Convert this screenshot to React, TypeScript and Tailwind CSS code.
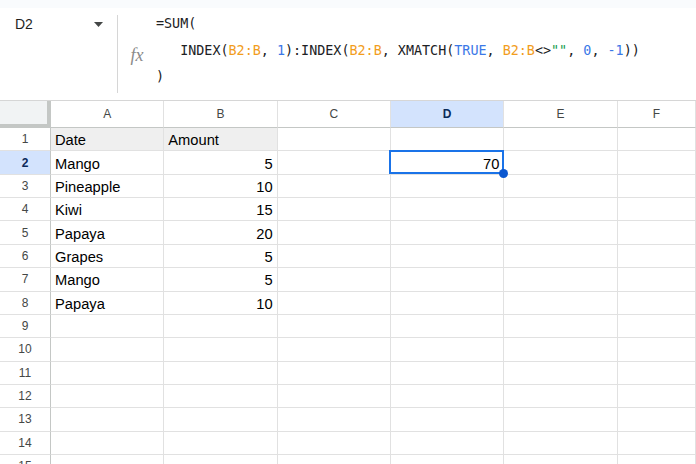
import React from "react";

const COLS = ["A", "B", "C", "D", "E", "F"];
const data: [string, string][] = [
  ["Date", "Amount"],
  ["Mango", "5"],
  ["Pineapple", "10"],
  ["Kiwi", "15"],
  ["Papaya", "20"],
  ["Grapes", "5"],
  ["Mango", "5"],
  ["Papaya", "10"],
];

const O = "text-[#f29d1d]";
const Bl = "text-[#3b78e7]";
const G = "text-[#129a4a]";

function Row({ n }: { n: number }) {
  const d = data[n - 1];
  const isHeader = n === 1;
  const sel = n === 2;
  return (
    <div className="flex h-[23.36px] shrink-0">
      <div
        className={`w-[51px] shrink-0 border-r border-b border-r-[#c4c7c5] border-b-[#e1e1e1] flex items-center justify-center text-[12px] ${
          sel ? "bg-[#d3e3fd] font-bold text-[#0b2a5a]" : "text-[#444746]"
        }`}
      >
        {n}
      </div>
      {COLS.map((c, i) => {
        let content: React.ReactNode = null;
        let right = false;
        if (d && i === 0) content = d[0];
        if (d && i === 1) {
          content = d[1];
          right = !isHeader;
        }
        if (n === 2 && c === "D") {
          content = "70";
          right = true;
        }
        return (
          <div
            key={c}
            className={`${
              i < 5 ? "w-[113.33px] shrink-0" : "flex-1"
            } border-r border-b border-[#e1e1e1] flex items-center px-[4px] pt-[2px] text-[14.7px] text-black whitespace-nowrap ${
              right ? "justify-end" : "justify-start"
            } ${isHeader && i < 2 ? "bg-[#efefef]" : ""}`}
          >
            {content}
          </div>
        );
      })}
    </div>
  );
}

export default function App() {
  return (
    <div
      className="relative w-[696px] h-[464px] overflow-hidden bg-white flex flex-col"
      style={{ fontFamily: '"Liberation Sans", Arial, sans-serif' }}
    >
      <div className="h-[8px] shrink-0 bg-[#f9fbfd]" />
      <div className="h-[93px] shrink-0 flex border-b border-[#d6d6d6] bg-white">
        <div className="w-[117px] shrink-0 flex justify-between items-start pl-[15px] pr-[14px] pt-[6px]">
          <span className="text-[14px] leading-[20px] text-[#1f1f1f]">D2</span>
          <svg width="9" height="5" viewBox="0 0 9 5" className="mt-[8px]">
            <path d="M0 0 L9 0 L4.5 5 Z" fill="#444746" />
          </svg>
        </div>
        <div className="w-px shrink-0 bg-[#d6d6d6] my-[7px]" />
        <div className="w-[38px] shrink-0 flex items-center justify-center pt-[2px]">
          <span
            className="text-[18px] italic text-[#8a8a8a]"
            style={{ fontFamily: '"Liberation Serif", "Times New Roman", serif' }}
          >
            fx
          </span>
        </div>
        <pre
          className="text-[13.4px] leading-[26.5px] pt-[3px] text-[#202124] m-0"
          style={{ fontFamily: '"DejaVu Sans Mono", "Liberation Mono", monospace' }}
        >
          {"=SUM(\n   INDEX("}
          <span className={O}>B2:B</span>
          {", "}
          <span className={Bl}>1</span>
          {"):INDEX("}
          <span className={O}>B2:B</span>
          {", XMATCH("}
          <span className={Bl}>TRUE</span>
          {", "}
          <span className={O}>B2:B</span>
          {"<>"}
          <span className={G}>{'""'}</span>
          {", "}
          <span className={Bl}>0</span>
          {", "}
          <span className={Bl}>-1</span>
          {"))\n)"}
        </pre>
      </div>
      <div className="h-[27px] shrink-0 flex">
        <div className="w-[51px] shrink-0 bg-[#f1f3f4] border-r-[4px] border-b-[4px] border-[#c4c7c5]" />
        {COLS.map((c, i) => (
          <div
            key={c}
            className={`${
              i < 5 ? "w-[113.33px] shrink-0" : "flex-1"
            } border-r border-b border-r-[#e1e1e1] border-b-[#c4c7c5] flex items-center justify-center text-[12px] ${
              c === "D" ? "bg-[#d3e3fd] font-bold text-[#0b2a5a]" : "text-[#444746]"
            }`}
          >
            {c}
          </div>
        ))}
      </div>
      {Array.from({ length: 15 }, (_, k) => (
        <Row key={k} n={k + 1} />
      ))}
      <div className="absolute left-[389px] top-[150px] w-[115px] h-[24px] border-2 border-[#1a73e8] pointer-events-none" />
      <div className="absolute left-[498.5px] top-[169px] w-[9px] h-[9px] rounded-full bg-[#0b57d0] pointer-events-none" />
    </div>
  );
}
